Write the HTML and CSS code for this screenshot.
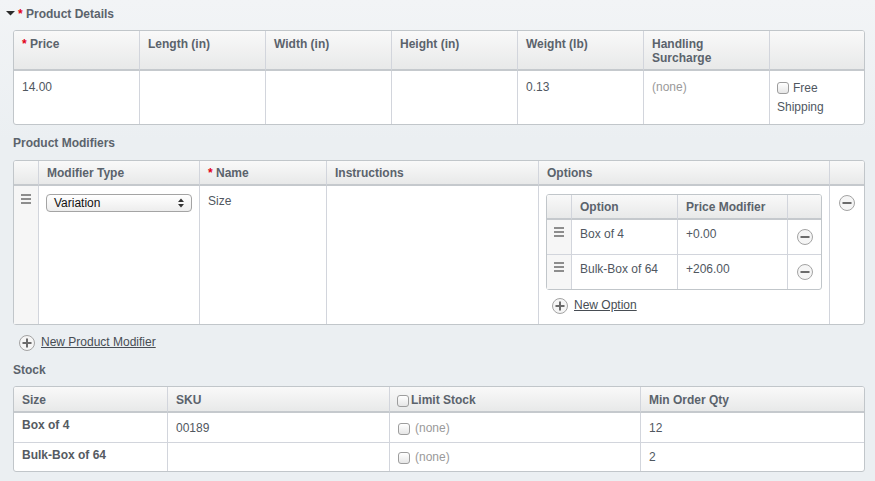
FILE: index.html
```html
<!DOCTYPE html>
<html>
<head>
<meta charset="utf-8">
<link rel="stylesheet" href="styles.css">
</head>
<body>
<div class="page">
  <div class="heading heading--toggle"><svg class="caret" width="9" height="5" viewBox="0 0 9 5"><polygon points="0,0 9,0 4.5,4.5" fill="#2b2b2b"/></svg><span class="req">*</span> Product Details</div>
  <table class="grid details">
    <colgroup><col class="d1"><col class="d2"><col class="d2"><col class="d2"><col class="d2"><col class="d2"><col class="d7"></colgroup>
    <thead>
      <tr><th><span class="req">*</span> Price</th><th>Length (in)</th><th>Width (in)</th><th>Height (in)</th><th>Weight (lb)</th><th>Handling Surcharge</th><th></th></tr>
    </thead>
    <tbody>
      <tr><td>14.00</td><td></td><td></td><td></td><td>0.13</td><td class="muted">(none)</td><td class="free"><span class="cb"></span>Free Shipping</td></tr>
    </tbody>
  </table>

  <div class="heading heading--mod">Product Modifiers</div>
  <table class="grid mods">
    <colgroup><col class="m1"><col class="m2"><col class="m3"><col class="m4"><col class="m5"><col class="m6"></colgroup>
    <thead>
      <tr><th></th><th>Modifier Type</th><th><span class="req">*</span> Name</th><th>Instructions</th><th>Options</th><th></th></tr>
    </thead>
    <tbody>
      <tr>
        <td class="handle-cell"><span class="handle"><i></i><i></i><i></i></span></td>
        <td class="type-cell"><div class="select"><span>Variation</span><svg width="6" height="10" viewBox="0 0 6 10"><polygon points="0,4 3,0.5 6,4" fill="#333"/><polygon points="0,6 3,9.5 6,6" fill="#333"/></svg></div></td>
        <td>Size</td>
        <td></td>
        <td class="opts-cell">
          <table class="grid opts">
            <colgroup><col class="o1"><col class="o2"><col class="o3"><col class="o4"></colgroup>
            <thead><tr><th></th><th>Option</th><th>Price Modifier</th><th></th></tr></thead>
            <tbody>
              <tr><td class="handle-cell"><span class="handle"><i></i><i></i><i></i></span></td><td>Box of 4</td><td>+0.00</td><td class="rm-cell"><svg class="ico" width="16" height="16" viewBox="0 0 16 16"><circle cx="8" cy="8" r="7.5" fill="#f5f5f5" stroke="#a3a3a3"/><rect x="3.5" y="7" width="9" height="2" fill="#6b6b6b"/></svg></td></tr>
              <tr><td class="handle-cell"><span class="handle"><i></i><i></i><i></i></span></td><td>Bulk-Box of 64</td><td>+206.00</td><td class="rm-cell"><svg class="ico" width="16" height="16" viewBox="0 0 16 16"><circle cx="8" cy="8" r="7.5" fill="#f5f5f5" stroke="#a3a3a3"/><rect x="3.5" y="7" width="9" height="2" fill="#6b6b6b"/></svg></td></tr>
            </tbody>
          </table>
          <div class="add add--opt"><svg class="ico" width="16" height="16" viewBox="0 0 16 16"><circle cx="8" cy="8" r="7.5" fill="#f5f5f5" stroke="#a3a3a3"/><rect x="3.5" y="7" width="9" height="2" fill="#6b6b6b"/><rect x="7" y="3.5" width="2" height="9" fill="#6b6b6b"/></svg><a href="#">New Option</a></div>
        </td>
        <td class="rm-outer"><svg class="ico" width="16" height="16" viewBox="0 0 16 16"><circle cx="8" cy="8" r="7.5" fill="#f5f5f5" stroke="#a3a3a3"/><rect x="3.5" y="7" width="9" height="2" fill="#6b6b6b"/></svg></td>
      </tr>
    </tbody>
  </table>
  <div class="add add--mod"><svg class="ico" width="16" height="16" viewBox="0 0 16 16"><circle cx="8" cy="8" r="7.5" fill="#f5f5f5" stroke="#a3a3a3"/><rect x="3.5" y="7" width="9" height="2" fill="#6b6b6b"/><rect x="7" y="3.5" width="2" height="9" fill="#6b6b6b"/></svg><a href="#">New Product Modifier</a></div>

  <div class="heading heading--stock">Stock</div>
  <table class="grid stock">
    <colgroup><col class="s1"><col class="s2"><col class="s3"><col class="s4"></colgroup>
    <thead>
      <tr><th>Size</th><th>SKU</th><th><span class="cb cb--head"></span>Limit Stock</th><th>Min Order Qty</th></tr>
    </thead>
    <tbody>
      <tr><th>Box of 4</th><td>00189</td><td class="muted"><span class="cb cb--body"></span>(none)</td><td>12</td></tr>
      <tr><th>Bulk-Box of 64</th><td></td><td class="muted"><span class="cb cb--body"></span>(none)</td><td>2</td></tr>
    </tbody>
  </table>
</div>
</body>
</html>
```

FILE: styles.css
```css
* { box-sizing: border-box; }

html, body { height: 100%; }

body {
  margin: 0;
  background: linear-gradient(#f2f4f6, #ebeff2 140px);
  background-color: #ebeff2;
  font-family: "Liberation Sans", Arial, sans-serif;
  font-size: 12px;
  line-height: 15px;
  color: #50575f;
}

.page {
  padding: 7px 10px 0 13px;
}

.heading {
  font-weight: bold;
  color: #5b636c;
  line-height: 15px;
  margin-bottom: 8px;
}
.heading--toggle { margin-left: -7px; }
.heading--mod { margin-top: 11px; margin-bottom: 9px; }
.heading--stock { margin-top: 12px; margin-bottom: 8px; }

.caret { vertical-align: 2px; margin-right: 3px; }
.req { color: #e2001a; }

/* generic grid table */
.grid {
  width: 100%;
  table-layout: fixed;
  border-collapse: separate;
  border-spacing: 0;
  border: 1px solid #c1c6ca;
  border-radius: 3px;
  background: #fff;
}
.grid th,
.grid td {
  text-align: left;
  vertical-align: top;
  padding: 9px 8px 0;
  border-left: 1px solid #d2d5dc;
  font-weight: normal;
}
.grid th:first-child,
.grid td:first-child { border-left: none; }

.grid thead th {
  background: linear-gradient(#f9f9f9, #e8e9e9);
  border-bottom: 2px solid #c5c9cd;
  font-weight: bold;
  color: #5b636c;
  padding: 5px 8px 0;
}
.grid thead th:first-child { border-top-left-radius: 2px; }
.grid thead th:last-child { border-top-right-radius: 2px; }

.muted { color: #9a9a9a; }

/* details */
.details .d1 { width: 125px; }
.details .d2 { width: 126px; }
.details .d7 { width: 95px; }
.details thead tr { height: 40px; }
.details thead th { line-height: 14px; padding-top: 6px; }
.details tbody tr { height: 53px; }
.details td.free { line-height: 19px; padding-left: 7px; padding-top: 8px; }

.cb {
  display: inline-block;
  width: 12px;
  height: 12px;
  border: 1px solid #9d9d9d;
  border-radius: 3px;
  background: linear-gradient(#ffffff, #e6e6e6);
  vertical-align: -2px;
  margin-right: 4px;
}
.cb--head { margin-left: 0; margin-right: 2px; vertical-align: -3px; }
.cb--body { margin-right: 5px; vertical-align: -3px; }

/* modifiers */
.mods .m1 { width: 24px; }
.mods .m2 { width: 161px; }
.mods .m3 { width: 127px; }
.mods .m4 { width: 212px; }
.mods .m5 { width: 291px; }
.mods .m6 { width: 35px; }
.mods > thead > tr { height: 25px; }
.mods > tbody > tr { height: 138px; }
.mods > tbody > tr > td { padding-top: 8px; }

.grid td.handle-cell {
  background: #f6f6f6;
  padding: 8px 0 0;
}
.handle {
  display: flex;
  flex-direction: column;
  gap: 2px;
  width: 10px;
  margin: 0 auto;
}
.handle i {
  display: block;
  height: 2px;
  background: #8d8d8d;
}

.grid td.type-cell { padding-left: 7px; padding-right: 7px; }
.select {
  display: flex;
  align-items: center;
  justify-content: space-between;
  height: 18px;
  padding: 0 7px 0 7px;
  border: 1px solid #a4a4a4;
  border-radius: 4px;
  background: linear-gradient(#ffffff, #ededed);
  color: #111;
  font-size: 12px;
}

.grid td.opts-cell { padding: 8px 7px 0; }
.grid td.rm-outer { padding: 9px 0 0; }
.ico { display: block; }
.rm-outer .ico, .rm-cell .ico { margin: 0 auto; }

/* options nested */
.opts .o1 { width: 24px; }
.opts .o2 { width: 106px; }
.opts .o3 { width: 110px; }
.opts .o4 { width: 34px; }
.opts thead tr { height: 25px; }
.opts tbody tr { height: 35px; }
.opts tbody tr:last-child { height: 34px; }
.opts tbody tr:not(:last-child) td { border-bottom: 1px solid #d2d5dc; }
.opts tbody td { padding-top: 7px; }
.opts tbody td.handle-cell { padding-top: 7px; }
.opts td.rm-cell { vertical-align: middle; padding: 0; }
.opts thead th:first-child { padding: 0; }

.add {
  display: flex;
  align-items: center;
  gap: 6px;
  height: 16px;
}
.add a {
  color: #474d54;
  text-decoration: underline;
  margin-bottom: 2px;
}
.add--opt { margin: 8px 0 0 6px; }
.add--mod { margin: 10px 0 0 6px; }

/* stock */
.stock .s1 { width: 153px; }
.stock .s2 { width: 222px; }
.stock .s3 { width: 251px; }
.stock .s4 { width: 224px; }
.stock thead tr { height: 26px; }
.stock thead th { padding-top: 6px; }
.stock thead th:nth-child(3) { padding-left: 7px; }
.stock tbody tr { height: 30px; }
.stock tbody tr:last-child { height: 28px; }
.stock tbody tr:not(:last-child) > * { border-bottom: 1px solid #d2d5dc; }
.stock tbody th { font-weight: bold; color: #555b62; padding-top: 5px; }
.stock tbody td { padding-top: 8px; }
.stock tbody tr:last-child td { padding-top: 7px; }
```
